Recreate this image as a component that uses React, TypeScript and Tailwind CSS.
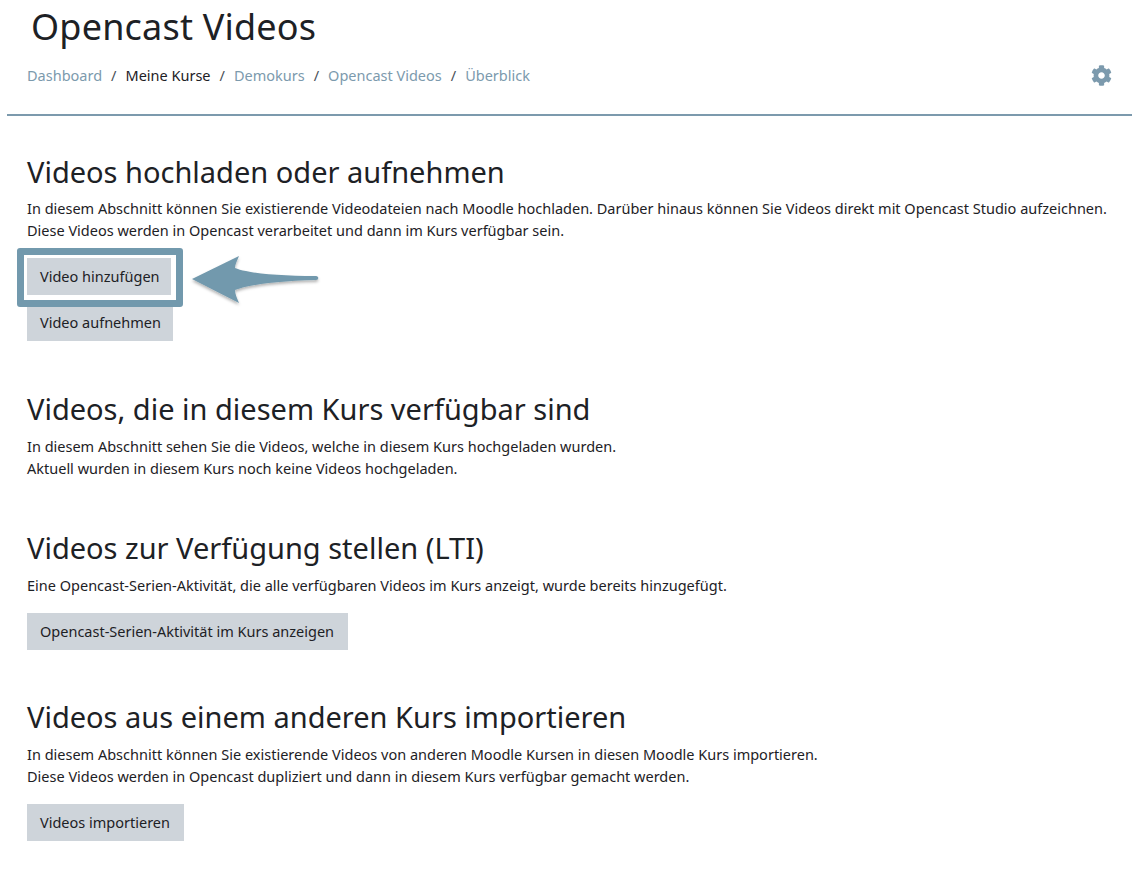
import { FaCog } from "react-icons/fa";

const crumbs = [
  { label: "Dashboard", link: true },
  { label: "Meine Kurse", link: false },
  { label: "Demokurs", link: true },
  { label: "Opencast Videos", link: true },
  { label: "Überblick", link: true },
];

function GrayButton({ label, width = "" }: { label: string; width?: string }) {
  return (
    <button className={`block h-[37px] bg-[#ced4da] px-[13px] text-left text-[14.5px] leading-[37px] text-[#1d2125] whitespace-nowrap ${width}`}>
      {label}
    </button>
  );
}

function Section({ title, children }: { title: string; children: React.ReactNode }) {
  return (
    <section>
      <h3 className="text-[29px] leading-[36px] text-[#1d2125]">{title}</h3>
      {children}
    </section>
  );
}

export default function App() {
  return (
    <div className="w-[1141px] h-[872px] overflow-hidden bg-white font-['Noto_Sans',sans-serif] text-[14.5px] leading-[22px] text-[#1d2125]">
      <header className="ml-[7px] mr-[9px] h-[116px] border-b-2 border-[#7c9aad] pt-[5px]">
        <h1 className="ml-[24px] text-[36px] leading-[44px] text-[#1d2125] tracking-[0.2px]">Opencast Videos</h1>
        <div className="mt-[15px] ml-[20px] mr-[20px] flex items-center justify-between">
          <nav className="flex items-center text-[14.5px] leading-[22px]">
            {crumbs.map((c, i) => (
              <span key={c.label} className="flex items-center">
                {i > 0 && <span className="mx-[9px] text-[#495057]">/</span>}
                <span className={c.link ? "text-[#7c9aad]" : "text-[#1d2125]"}>{c.label}</span>
              </span>
            ))}
          </nav>
          <FaCog className="h-[21px] w-[21px] text-[#7c9aad]" />
        </div>
      </header>

      <main className="px-[27px] pt-[38px]">
        <Section title="Videos hochladen oder aufnehmen">
          <p className="mt-[7px] whitespace-nowrap">
            In diesem Abschnitt können Sie existierende Videodateien nach Moodle hochladen. Darüber hinaus können Sie Videos direkt mit Opencast Studio aufzeichnen.
            <br />
            Diese Videos werden in Opencast verarbeitet und dann im Kurs verfügbar sein.
          </p>
          <div className="relative mt-[17px] flex flex-col items-start gap-[9px]">
            <GrayButton label="Video hinzufügen" width="w-[144px]" />
            <GrayButton label="Video aufnehmen" width="w-[146px]" />
            {/* highlight frame and arrow drawn over the page */}
            <div className="absolute left-[-10px] top-[-10px] h-[59px] w-[166px] rounded-[3px] border-[7px] border-[#7299ad]" />
            <svg className="absolute left-[160px] top-[-5px]" width="135" height="55" viewBox="0 0 135 55">
              <defs>
                <filter id="arrowShadow" x="-10%" y="-20%" width="120%" height="150%">
                  <feDropShadow dx="0" dy="2" stdDeviation="1.5" floodColor="#000" floodOpacity="0.3" />
                </filter>
              </defs>
              <path
                d="M5 26 L52 3 C50 8 48 11 48 15 C60 20 90 23 129 23 C132 23 132 27 129 27 C90 28 60 32 48 37 C48 41 50 45 52 50 Z"
                fill="#7299ad"
                filter="url(#arrowShadow)"
              />
            </svg>
          </div>
        </Section>

        <div className="mt-[50px]">
          <Section title="Videos, die in diesem Kurs verfügbar sind">
            <p className="mt-[8px]">
              In diesem Abschnitt sehen Sie die Videos, welche in diesem Kurs hochgeladen wurden.
              <br />
              Aktuell wurden in diesem Kurs noch keine Videos hochgeladen.
            </p>
          </Section>
        </div>

        <div className="mt-[51px]">
          <Section title="Videos zur Verfügung stellen (LTI)">
            <p className="mt-[8px]">
              Eine Opencast-Serien-Aktivität, die alle verfügbaren Videos im Kurs anzeigt, wurde bereits hinzugefügt.
            </p>
            <div className="mt-[17px]">
              <GrayButton label="Opencast-Serien-Aktivität im Kurs anzeigen" width="w-[321px]" />
            </div>
          </Section>
        </div>

        <div className="mt-[49px]">
          <Section title="Videos aus einem anderen Kurs importieren">
            <p className="mt-[8px]">
              In diesem Abschnitt können Sie existierende Videos von anderen Moodle Kursen in diesen Moodle Kurs importieren.
              <br />
              Diese Videos werden in Opencast dupliziert und dann in diesem Kurs verfügbar gemacht werden.
            </p>
            <div className="mt-[17px]">
              <GrayButton label="Videos importieren" width="w-[157px]" />
            </div>
          </Section>
        </div>
      </main>
    </div>
  );
}
